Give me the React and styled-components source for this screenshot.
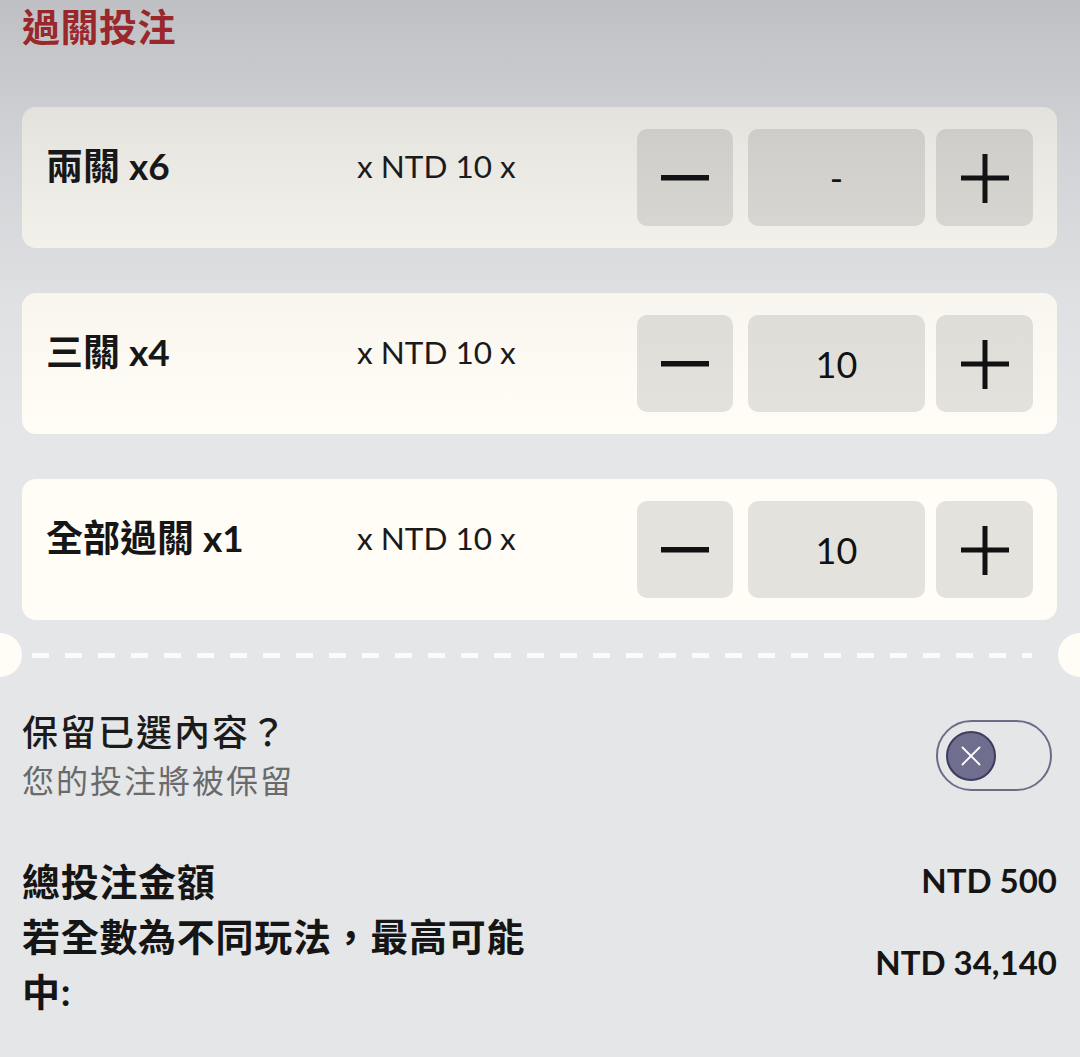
import React, { useState } from 'react';
import styled, { createGlobalStyle } from 'styled-components';

const GlobalStyle = createGlobalStyle`
    html, body {
        margin: 0;
        padding: 0;
        background: #e5e6e8;
    }
    body {
        font-family: Lato, "Noto Sans CJK TC", "Noto Sans", sans-serif;
        color: #161616;
    }
`;

const parlays = [
    { label: '兩關 x6', value: '-' },
    { label: '三關 x4', value: '10' },
    { label: '全部過關 x1', value: '10' },
];

function MinusIcon() {
    return (
        <svg width="50" height="50" viewBox="0 0 50 50">
            <rect x="1" y="22" width="48" height="5.5" fill="#111" />
        </svg>
    );
}

function PlusIcon() {
    return (
        <svg width="50" height="50" viewBox="0 0 50 50">
            <rect x="1" y="22.5" width="48" height="5" fill="#111" />
            <rect x="22.5" y="1" width="5" height="49" fill="#111" />
        </svg>
    );
}

function App() {
    const [keep, setKeep] = useState(false);

    return (
        <Page>
            <GlobalStyle />
            <Shade />
            <Title>過關投注</Title>

            <CardList>
                {parlays.map((p) => (
                    <Card key={p.label}>
                        <Label>{p.label}</Label>
                        <Stake>x NTD 10 x</Stake>
                        <Stepper>
                            <StepButton aria-label="minus" size={96}><MinusIcon /></StepButton>
                            <ValueBox>{p.value}</ValueBox>
                            <StepButton aria-label="plus" size={97}><PlusIcon /></StepButton>
                        </Stepper>
                    </Card>
                ))}
            </CardList>

            <Divider>
                <Notch side="left" />
                <Dashes />
                <Notch side="right" />
            </Divider>

            <KeepRow>
                <div>
                    <KeepTitle>保留已選內容？</KeepTitle>
                    <KeepSub>您的投注將被保留</KeepSub>
                </div>
                <Toggle onClick={() => setKeep(!keep)} on={keep ? 1 : 0}>
                    <Knob>
                        <svg width="22" height="22" viewBox="0 0 22 22">
                            <path d="M2.5 2.5 L19.5 19.5 M19.5 2.5 L2.5 19.5" stroke="#fff" strokeWidth="1.8" strokeLinecap="round" />
                        </svg>
                    </Knob>
                </Toggle>
            </KeepRow>

            <Totals>
                <TotalRow>
                    <TotalLabel>總投注金額</TotalLabel>
                    <TotalValue>NTD 500</TotalValue>
                </TotalRow>
                <TotalRow>
                    <TotalLabel>若全數為不同玩法，最高可能中:</TotalLabel>
                    <TotalValue>NTD 34,140</TotalValue>
                </TotalRow>
            </Totals>
        </Page>
    );
}

const Page = styled.div`
    position: relative;
    width: 1080px;
    min-height: 1057px;
    box-sizing: border-box;
    padding: 0 23px 40px 22px;
    overflow: hidden;
`;

const Shade = styled.div`
    position: absolute;
    top: 0;
    left: 0;
    right: 0;
    height: 430px;
    pointer-events: none;
    z-index: 5;
    background: linear-gradient(
        to bottom,
        rgba(38, 40, 52, 0.2) 0,
        rgba(38, 40, 52, 0.1) 150px,
        rgba(38, 40, 52, 0.03) 300px,
        rgba(38, 40, 52, 0) 430px
    );
`;

const Title = styled.h1`
    margin: 0;
    padding-top: 3px;
    font-size: 38px;
    line-height: 46px;
    font-weight: 700;
    color: #b3272a;
    letter-spacing: 0.5px;
`;

const CardList = styled.div`
    display: flex;
    flex-direction: column;
    gap: 45px;
    margin-top: 58px;
`;

const Card = styled.div`
    display: flex;
    align-items: flex-start;
    height: 141px;
    box-sizing: border-box;
    padding: 22px 24px 22px 24px;
    background: #fffdf5;
    border-radius: 14px;
`;

const Label = styled.div`
    width: 311px;
    flex-shrink: 0;
    font-size: 37px;
    line-height: 74px;
    font-weight: 700;
    white-space: nowrap;
`;

const Stake = styled.div`
    flex: 1;
    font-size: 31.5px;
    line-height: 74px;
    font-weight: 400;
    color: #1a1a1a;
`;

const Stepper = styled.div`
    display: flex;
    gap: 13px;
`;

const StepButton = styled.button`
    width: ${(p) => p.size}px;
    height: 97px;
    border: none;
    border-radius: 10px;
    background: #e4e2dc;
    display: flex;
    align-items: center;
    justify-content: center;
    padding: 0;
    cursor: pointer;
`;

const ValueBox = styled.div`
    width: 177px;
    height: 97px;
    margin-left: 2px;
    margin-right: -2px;
    border-radius: 10px;
    background: #e4e2dc;
    display: flex;
    align-items: center;
    justify-content: center;
    font-size: 36px;
    color: #111;
`;

const Divider = styled.div`
    display: flex;
    align-items: center;
    margin: 13px -23px 0 -22px;
    height: 44px;
`;

const Notch = styled.div`
    width: 22px;
    height: 44px;
    flex-shrink: 0;
    background: #fffdf5;
    border-radius: ${(p) => (p.side === 'left' ? '0 22px 22px 0' : '22px 0 0 22px')};
`;

const Dashes = styled.div`
    flex: 1;
    height: 5px;
    margin: 0 26px 0 10px;
    background: repeating-linear-gradient(
        90deg,
        #fbfbf7 0,
        #fbfbf7 17px,
        transparent 17px,
        transparent 33px
    );
`;

const KeepRow = styled.div`
    display: flex;
    align-items: center;
    justify-content: space-between;
    margin-top: 31px;
    padding-right: 5px;
`;

const KeepTitle = styled.div`
    font-size: 36px;
    line-height: 48px;
    font-weight: 500;
    color: #1b1b1b;
    letter-spacing: 2px;
`;

const KeepSub = styled.div`
    font-size: 32px;
    line-height: 50px;
    color: #6a6a6a;
    letter-spacing: 2px;
`;

const Toggle = styled.div`
    width: 116px;
    height: 71px;
    margin-top: -3px;
    box-sizing: border-box;
    border: 2.5px solid #6d6c88;
    border-radius: 36px;
    display: flex;
    align-items: center;
    justify-content: ${(p) => (p.on ? 'flex-end' : 'flex-start')};
    padding: 0 8px;
    cursor: pointer;
`;

const Knob = styled.div`
    width: 50px;
    height: 50px;
    box-sizing: border-box;
    border-radius: 50%;
    background: #6f6e8e;
    border: 2.5px solid #3f3d5e;
    display: flex;
    align-items: center;
    justify-content: center;
`;

const Totals = styled.div`
    margin-top: 48px;
    display: flex;
    flex-direction: column;
`;

const TotalRow = styled.div`
    display: flex;
    align-items: center;
    justify-content: space-between;
`;

const TotalLabel = styled.div`
    width: 525px;
    font-size: 38px;
    line-height: 55px;
    font-weight: 700;
    color: #151515;
    letter-spacing: 0.7px;
`;

const TotalValue = styled.div`
    font-size: 33px;
    font-weight: 700;
    color: #151515;
    white-space: nowrap;
    margin-top: -4px;
`;

export default App;
